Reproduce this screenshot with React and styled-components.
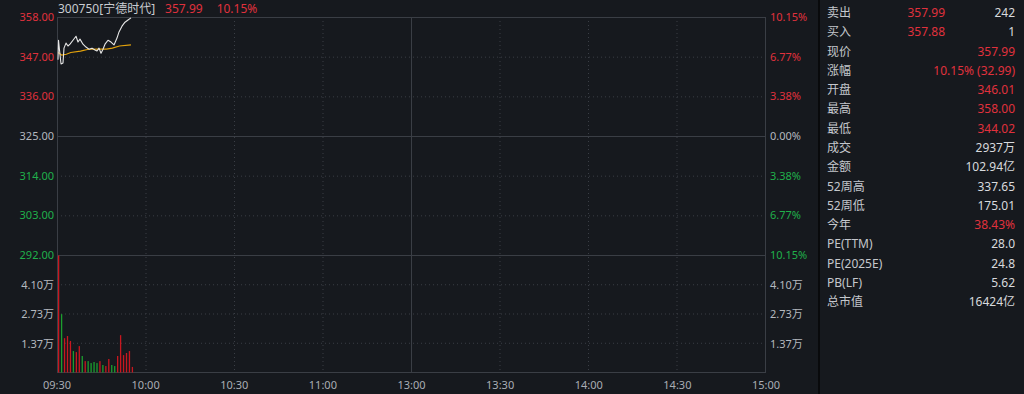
import React from 'react';
import styled, { createGlobalStyle } from 'styled-components';

const RED = '#e0313d';
const GREEN = '#20b04b';
const GRAY = '#b4b8be';
const GRID = '#3a3e45';

const GlobalStyle = createGlobalStyle`
  html, body {
    margin: 0;
    padding: 0;
    background: #16191e;
  }
  body {
    font-family: "Noto Sans", "Noto Sans CJK SC", sans-serif;
    color: ${GRAY};
  }
`;

const Page = styled.div`
  display: flex;
  width: 1024px;
  height: 394px;
  background: #16191e;
  overflow: hidden;
`;

const ChartPane = styled.section`
  display: flex;
  flex-direction: column;
  width: 818px;
  flex-shrink: 0;
`;

const TitleBar = styled.div`
  display: flex;
  align-items: center;
  height: 17px;
  padding-left: 58px;
  font-size: 12px;
  line-height: 17px;
  white-space: nowrap;
`;

const Code = styled.span`
  color: #c9ccd1;
  margin-right: 10px;
`;

const Quote = styled.span`
  color: ${RED};
  margin-right: 14px;
`;

const ChartGrid = styled.div`
  display: grid;
  grid-template-columns: 57px 709px 1fr;
  grid-template-rows: 238px 118px;
`;

const Axis = styled.div`
  display: flex;
  flex-direction: column;
  justify-content: space-between;
  font-size: 11px;
  grid-column: ${(p) => (p.$side === 'left' ? 1 : 3)};
  grid-row: ${(p) => (p.$region === 'price' ? 1 : 2)};
`;

const Tick = styled.div`
  display: flex;
  align-items: center;
  height: 0;
  line-height: 14px;
  white-space: nowrap;
  color: ${(p) => p.$color || GRAY};
  justify-content: ${(p) => (p.$side === 'left' ? 'flex-end' : 'flex-start')};
  padding: ${(p) => (p.$side === 'left' ? '0 3px 0 0' : '0 0 0 4px')};
`;

const PlotBox = styled.div`
  grid-column: 2;
  grid-row: 1 / span 2;
  line-height: 0;
`;

const TimeAxis = styled.div`
  display: flex;
  justify-content: space-between;
  width: 709px;
  margin-left: 57px;
  height: 21px;
  font-size: 11px;
  color: #a9adb4;
`;

const TimeTick = styled.div`
  display: flex;
  justify-content: center;
  width: 0;
  line-height: 23px;
  white-space: nowrap;
`;

const Divider = styled.div`
  width: 2px;
  flex-shrink: 0;
  background: #090a0c;
`;

const QuotePanel = styled.aside`
  flex: 1;
  padding: 3px 9px 0 7px;
  font-size: 12px;
`;

const Row = styled.div`
  display: grid;
  grid-template-columns: 1fr auto 70px;
  align-items: center;
  height: 19.27px;
  line-height: 19px;
  white-space: nowrap;
`;

const Label = styled.span`
  color: #c4c7cc;
`;

const Value = styled.span`
  text-align: right;
  color: ${(p) => (p.$up ? RED : '#d8dadd')};
  grid-column: ${(p) => (p.$span ? '2 / span 2' : 'auto')};
`;

// plot geometry (svg units = px)
const W = 709;
const PRICE_TOP = 0.5;
const PRICE_BOTTOM = 238.5;
const VOL_BOTTOM = 355.5;
const MIN_PX = 708 / 240;
const VOL_PX = 29.4 / 1.37;

const mx = (m) => 0.5 + m * MIN_PX;
const py = (p) => PRICE_TOP + ((358 - p) / 66) * (PRICE_BOTTOM - PRICE_TOP);

const priceLine = [
  [0.17, 346.3], [0.34, 351.7], [0.68, 349.0], [1.19, 345.1], [1.86, 345.4],
  [2.2, 349.5], [2.88, 350.9], [3.56, 350.1], [4.24, 350.6], [5.25, 351.7],
  [6.27, 352.8], [6.95, 351.2], [7.63, 352.0], [8.64, 350.6], [9.66, 349.8],
  [10.68, 349.2], [11.69, 349.5], [12.71, 349.0], [13.39, 348.7], [14.07, 349.5],
  [14.75, 348.1], [15.42, 349.2], [16.1, 350.6], [17.12, 351.7], [18.14, 351.2],
  [19.15, 350.4], [20.17, 352.3], [20.85, 354.0], [21.86, 355.6], [22.88, 356.7],
  [23.9, 357.3], [24.92, 357.9],
];

const avgLine = [
  [0.2, 348.3], [1.4, 347.6], [3, 347.8], [4.5, 348.3], [7.8, 348.7],
  [10.5, 349.2], [14, 349.25], [16.6, 349.25], [18.6, 349.5], [21, 350.1],
  [24.9, 350.4],
];

// 万手 per minute, u = up bar
const volumes = [
  [5.47, 1], [2.72, 0], [1.6, 1], [1.7, 1], [1.47, 1], [1.0, 0], [0.95, 1],
  [1.23, 1], [0.77, 0], [0.53, 1], [0.53, 0], [0.44, 0], [0.49, 0], [0.44, 0],
  [0.53, 1], [0.35, 0], [0.3, 1], [0.63, 1], [0.35, 0], [0.3, 0], [0.77, 1],
  [1.74, 1], [0.81, 1], [0.91, 1], [1.0, 1], [0.26, 1],
];

const toPoints = (list) => list.map(([m, p]) => `${mx(m).toFixed(2)},${py(p).toFixed(2)}`).join(' ');

const IntradayPlot = () => {
  const priceRows = Array.from({ length: 7 }, (_, i) => PRICE_TOP + (i * (PRICE_BOTTOM - PRICE_TOP)) / 6);
  const volRows = [1, 2, 3].map((j) => PRICE_BOTTOM + (j * (VOL_BOTTOM - PRICE_BOTTOM)) / 4);
  const cols = Array.from({ length: 9 }, (_, k) => 0.5 + k * 88.5);

  return (
    <svg width={W} height={356} viewBox={`0 0 ${W} 356`}>
      <g stroke={GRID} strokeWidth="1" strokeDasharray="1 3">
        {priceRows.slice(1, 6).filter((_, i) => i !== 2).map((y) => (
          <line key={y} x1="0" x2={W} y1={y} y2={y} />
        ))}
        {volRows.map((y) => (
          <line key={y} x1="0" x2={W} y1={y} y2={y} />
        ))}
        {cols.slice(1, 8).filter((_, i) => i !== 3).map((x) => (
          <line key={x} x1={x} x2={x} y1="0" y2="356" />
        ))}
      </g>
      <g stroke={GRID} strokeWidth="1">
        <rect x="0.5" y="0.5" width={W - 1} height={VOL_BOTTOM - 0.5} fill="none" />
        <line x1="0" x2={W} y1={priceRows[3]} y2={priceRows[3]} />
        <line x1="0" x2={W} y1={PRICE_BOTTOM} y2={PRICE_BOTTOM} />
        <line x1={cols[4]} x2={cols[4]} y1="0" y2="356" />
      </g>
      {volumes.map(([v, up], i) => {
        const h = Math.min(v * VOL_PX, VOL_BOTTOM - PRICE_BOTTOM);
        return (
          <rect
            key={i}
            x={1 + i * MIN_PX}
            y={VOL_BOTTOM - h}
            width="1.3"
            height={h}
            fill={up ? '#c8171f' : '#1c9e2e'}
          />
        );
      })}
      <polyline points={toPoints(avgLine)} fill="none" stroke="#e3a20c" strokeWidth="1.2" />
      <polyline points={toPoints(priceLine)} fill="none" stroke="#e6e6e6" strokeWidth="1.1" strokeLinejoin="round" />
    </svg>
  );
};

const leftPrice = [
  ['358.00', RED], ['347.00', RED], ['336.00', RED], ['325.00', GRAY],
  ['314.00', GREEN], ['303.00', GREEN], ['292.00', GREEN],
];
const rightPrice = [
  ['10.15%', RED], ['6.77%', RED], ['3.38%', RED], ['0.00%', GRAY],
  ['3.38%', GREEN], ['6.77%', GREEN], ['10.15%', GREEN],
];
const volTicks = ['', '4.10万', '2.73万', '1.37万', ''];
const times = ['09:30', '10:00', '10:30', '11:00', '13:00', '13:30', '14:00', '14:30', '15:00'];

const quoteRows = [
  { label: '现价', value: '357.99', up: true },
  { label: '涨幅', value: '10.15% (32.99)', up: true },
  { label: '开盘', value: '346.01', up: true },
  { label: '最高', value: '358.00', up: true },
  { label: '最低', value: '344.02', up: true },
  { label: '成交', value: '2937万' },
  { label: '金额', value: '102.94亿' },
  { label: '52周高', value: '337.65' },
  { label: '52周低', value: '175.01' },
  { label: '今年', value: '38.43%', up: true },
  { label: 'PE(TTM)', value: '28.0' },
  { label: 'PE(2025E)', value: '24.8' },
  { label: 'PB(LF)', value: '5.62' },
  { label: '总市值', value: '16424亿' },
];

const App = () => {
  return (
    <Page>
      <GlobalStyle />
      <ChartPane>
        <TitleBar>
          <Code>300750[宁德时代]</Code>
          <Quote>357.99</Quote>
          <Quote>10.15%</Quote>
        </TitleBar>
        <ChartGrid>
          <Axis $side="left" $region="price">
            {leftPrice.map(([t, c]) => (
              <Tick key={t} $side="left" $color={c}>{t}</Tick>
            ))}
          </Axis>
          <PlotBox>
            <IntradayPlot />
          </PlotBox>
          <Axis $side="right" $region="price">
            {rightPrice.map(([t, c], i) => (
              <Tick key={i} $side="right" $color={c}>{t}</Tick>
            ))}
          </Axis>
          <Axis $side="left" $region="volume">
            {volTicks.map((t, i) => (
              <Tick key={i} $side="left">{t}</Tick>
            ))}
          </Axis>
          <Axis $side="right" $region="volume">
            {volTicks.map((t, i) => (
              <Tick key={i} $side="right">{t}</Tick>
            ))}
          </Axis>
        </ChartGrid>
        <TimeAxis>
          {times.map((t) => (
            <TimeTick key={t}>{t}</TimeTick>
          ))}
        </TimeAxis>
      </ChartPane>
      <Divider />
      <QuotePanel>
        <Row>
          <Label>卖出</Label>
          <Value $up>357.99</Value>
          <Value>242</Value>
        </Row>
        <Row>
          <Label>买入</Label>
          <Value $up>357.88</Value>
          <Value>1</Value>
        </Row>
        {quoteRows.map((r) => (
          <Row key={r.label}>
            <Label>{r.label}</Label>
            <Value $span $up={r.up}>{r.value}</Value>
          </Row>
        ))}
      </QuotePanel>
    </Page>
  );
};

export default App;
